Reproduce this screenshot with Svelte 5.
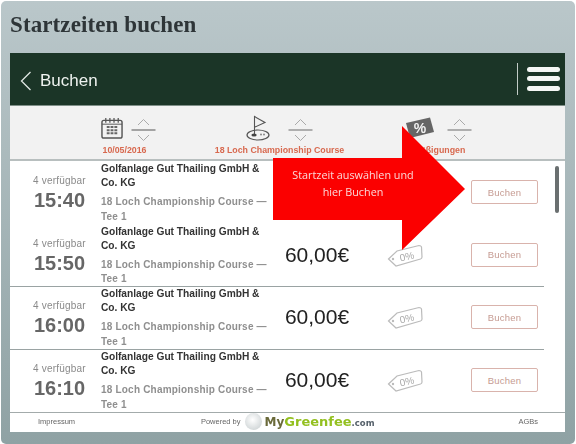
<script>
  const rows = [
    { time: "15:40", covered: true },
    { time: "15:50", covered: false },
    { time: "16:00", covered: false },
    { time: "16:10", covered: false }
  ];
</script>

<div class="page">
  <h1 class="title">Startzeiten buchen</h1>

  <div class="panel">
    <header class="topbar">
      <svg class="back" viewBox="0 0 12 20" aria-hidden="true">
        <path d="M10.5 1 L1.5 10 L10.5 19" fill="none" stroke="#dfe6e2" stroke-width="1.3" />
      </svg>
      <span class="topbar__label">Buchen</span>
      <span class="topbar__divider"></span>
      <div class="burger">
        <span></span>
        <span></span>
        <span></span>
      </div>
    </header>

    <div class="filters">
      <div class="filter">
        <div class="filter__top filter__top--date">
          <svg class="icon" width="22" height="22" viewBox="0 0 23 23" aria-hidden="true">
            <rect x="1" y="3.5" width="21" height="18.5" rx="2" fill="#f2f2f2" stroke="#555" stroke-width="1.5" />
            <path d="M5 1v5M9.3 1v5M13.6 1v5M18 1v5" stroke="#555" stroke-width="1.3" />
            <path d="M1 7.5h21" stroke="#555" stroke-width="1" />
            <path d="M6 10.5h11M6 13.8h11M6 17h11" stroke="#666" stroke-width="2" stroke-dasharray="3 1" />
          </svg>
          {@render stepper()}
        </div>
        <span class="filter__label">10/05/2016</span>
      </div>

      <div class="filter">
        <div class="filter__top filter__top--course">
          <svg class="icon" width="24" height="26" viewBox="0 0 24 26" aria-hidden="true">
            <path d="M8.5 19V1.5L19 7.5 9 12" fill="#f2f2f2" stroke="#555" stroke-width="1.1" />
            <ellipse cx="12" cy="20" rx="11" ry="5" fill="none" stroke="#555" stroke-width="1.2" />
            <ellipse cx="8" cy="20" rx="2.6" ry="1.5" fill="#444" />
            <circle cx="15" cy="19.5" r="1" fill="#888" />
            <circle cx="18" cy="19.5" r="1" fill="#888" />
          </svg>
          {@render stepper()}
        </div>
        <span class="filter__label">18 Loch Championship Course</span>
      </div>

      <div class="filter">
        <div class="filter__top filter__top--discount">
          <svg class="icon" width="30" height="22" viewBox="0 0 30 22" aria-hidden="true">
            <path d="M1 6 L25 0.5 L29 15 L5 21 Z" fill="#666" />
            <text x="15" y="16" class="percent" text-anchor="middle">%</text>
          </svg>
          {@render stepper()}
        </div>
        <span class="filter__label">Ermäßigungen</span>
      </div>
    </div>

    <div class="list">
      {#each rows as row, i}
        <div class="row" class:row--plain={i < 2}>
          <div class="row__time">
            <span class="row__free">4 verfügbar</span>
            <strong class="row__clock">{row.time}</strong>
          </div>
          <div class="row__info">
            <div class="row__name">Golfanlage Gut Thailing GmbH &amp; Co. KG</div>
            <div class="row__course">18 Loch Championship Course — Tee 1</div>
          </div>
          <!-- first row's price and tag sit behind the red arrow -->
          <div class="row__price">{row.covered ? "" : "60,00€"}</div>
          <div class="row__tag">
            {#if !row.covered}
              <svg width="36" height="24" viewBox="0 0 36 24" aria-hidden="true">
                <path d="M1.5 15 L10 7 L32 1.5 Q34 1.5 34.5 3 L35 13 Q35 14.5 33.5 15 L9 22 Z" fill="#fff" stroke="#bbb" stroke-width="1.2" />
                <circle cx="6" cy="15" r="1.2" fill="#bbb" />
                <text x="20" y="16" class="tag-text" text-anchor="middle" transform="rotate(-12 20 13)">0%</text>
              </svg>
            {/if}
          </div>
          <button class="row__btn">Buchen</button>
        </div>
      {/each}
      <span class="scrollbar"></span>
    </div>

    <footer class="foot">
      <span class="foot__link">Impressum</span>
      <div class="foot__brand">
        <span class="foot__powered">Powered by</span>
        <span class="foot__ball"></span>
        <span class="logo"><b class="logo__my">My</b><b class="logo__green">Greenfee</b><b class="logo__com">.com</b></span>
      </div>
      <span class="foot__link">AGBs</span>
    </footer>
  </div>

  <div class="callout">
    <svg width="194" height="126" viewBox="0 0 194 126" aria-hidden="true">
      <polygon points="1,33 130,33 130,1 193,64 130,125 130,95 1,95" fill="#fb0000" />
    </svg>
    <p class="callout__text">Startzeit auswählen und<br />hier Buchen</p>
  </div>
</div>

{#snippet stepper()}
  <svg class="stepper" width="25" height="26" viewBox="0 0 25 26" aria-hidden="true">
    <path d="M7 8 L12.5 2.5 L18 8" fill="none" stroke="#aaa" stroke-width="1" />
    <path d="M0.5 13h24" stroke="#888" stroke-width="1.3" />
    <path d="M7 18 L12.5 23.5 L18 18" fill="none" stroke="#aaa" stroke-width="1" />
  </svg>
{/snippet}

<style>
  :global(body) {
    background: #fff;
  }

  .page {
    position: relative;
    box-sizing: border-box;
    width: 574px;
    height: 443px;
    margin-left: 1px;
    margin-top: 1px;
    padding: 0 9px;
    border-radius: 5px;
    background: linear-gradient(#bac7ca, #8fa2a4);
    font-family: "Liberation Sans", Arial, sans-serif;
    overflow: hidden;
    filter: blur(0.6px);
  }

  .title {
    margin: 0;
    height: 52px;
    padding-top: 10px;
    box-sizing: border-box;
    font-family: "Liberation Serif", serif;
    font-size: 23px;
    line-height: 27px;
    letter-spacing: 0.1px;
    font-weight: 700;
    color: #2e3538;
  }

  .panel {
    width: 555px;
    background: #fff;
  }

  .topbar {
    display: flex;
    align-items: center;
    height: 53px;
    box-sizing: border-box;
    padding: 3px 5px 0 10px;
    background: #1b3527;
    border-bottom: 1px solid #7f8f88;
    color: #eef2ef;
  }

  .back {
    width: 12px;
    height: 20px;
    margin-right: 8px;
  }

  .topbar__label {
    font-size: 17px;
    flex: 1;
  }

  .topbar__divider {
    width: 1px;
    height: 32px;
    background: #c2ccc7;
    margin-right: 9px;
    margin-bottom: 3px;
  }

  .burger {
    display: flex;
    flex-direction: column;
    gap: 4.5px;
    width: 33px;
    margin-bottom: 4px;
  }

  .burger span {
    height: 5px;
    border-radius: 3px;
    background: #f5f7f5;
  }

  .filters {
    display: grid;
    grid-template-columns: repeat(3, 155px);
    height: 55px;
    padding: 0 53px 0 37px;
    background: #f2f2f2;
    border-bottom: 2px solid #b8bfbf;
    box-sizing: border-box;
  }

  .filter {
    display: flex;
    flex-direction: column;
    align-items: center;
    padding-top: 10px;
  }

  .filter__top {
    display: flex;
    align-items: center;
    gap: 8px;
    height: 28px;
  }

  .filter__top--date {
    margin-left: 8px;
  }

  .filter__top--course {
    gap: 18px;
  }

  .filter__top--discount {
    gap: 12px;
    margin-left: 8px;
  }

  .icon {
    margin-top: -4px;
  }

  .filter__label {
    font-size: 8.8px;
    font-weight: 700;
    line-height: 12px;
    color: #d8694f;
    white-space: nowrap;
  }

  .percent {
    font-family: "Liberation Sans", sans-serif;
    font-size: 14px;
    font-weight: 700;
    fill: #f2f2f2;
  }

  .list {
    position: relative;
    padding-right: 21px;
  }

  .row {
    display: grid;
    grid-template-columns: 91px 176px 80px 96px 1fr;
    align-items: center;
    height: 62.7px;
    box-sizing: border-box;
    border-top: 1px solid #9aa3a3;
  }

  .row--plain {
    border-top-color: transparent;
  }

  .row__time {
    display: flex;
    flex-direction: column;
    align-items: center;
    padding-left: 8px;
    color: #666;
  }

  .row__free {
    font-size: 10px;
    color: #8a8a8a;
    line-height: 14px;
    letter-spacing: 0.2px;
  }

  .row__clock {
    font-size: 20px;
    line-height: 24px;
  }

  .row__name {
    font-size: 10.2px;
    font-weight: 700;
    line-height: 14px;
    color: #333;
    margin-bottom: 5px;
  }

  .row__course {
    font-size: 10px;
    font-weight: 700;
    line-height: 14.5px;
    letter-spacing: 0.2px;
    color: #8f8f8f;
  }

  .row__price {
    margin-bottom: 2px;
    font-size: 21px;
    color: #222;
    text-align: center;
  }

  .row__tag {
    display: flex;
    justify-content: center;
  }

  .tag-text {
    font-family: "Liberation Sans", sans-serif;
    font-size: 10px;
    fill: #aaa;
  }

  .row__btn {
    width: 67px;
    height: 24px;
    padding: 0;
    margin-left: 18px;
    margin-bottom: 2px;
    background: #fff;
    border: 1px solid #d9b3ac;
    border-radius: 2px;
    font-family: "Liberation Sans", sans-serif;
    font-size: 9.5px;
    letter-spacing: 0.2px;
    color: #c69b92;
  }

  .scrollbar {
    position: absolute;
    top: 5px;
    right: 6px;
    width: 4px;
    height: 47px;
    border-radius: 2px;
    background: #6a6f70;
  }

  .foot {
    display: flex;
    align-items: center;
    justify-content: space-between;
    height: 20px;
    padding: 0 27px 1px 28px;
    border-top: 1px solid #a3abab;
    box-sizing: border-box;
    background: #fff;
  }

  .foot__link,
  .foot__powered {
    font-size: 7.5px;
    color: #666;
  }

  .foot__brand {
    display: flex;
    align-items: center;
    margin-right: 18px;
  }

  .foot__ball {
    width: 17px;
    height: 17px;
    margin: 0 3px 0 4px;
    border-radius: 50%;
    background: radial-gradient(circle at 45% 40%, #fff, #d5dadb 70%, #aeb6b6);
  }

  .logo {
    font-family: "DejaVu Sans", sans-serif;
    font-size: 12px;
    white-space: nowrap;
  }

  .logo__my {
    color: #6a6a3a;
  }

  .logo__green {
    font-size: 13px;
    color: #93c01f;
  }

  .logo__com {
    font-size: 8.5px;
    color: #55606a;
  }

  .callout {
    position: absolute;
    left: 271px;
    top: 124px;
    width: 194px;
    height: 126px;
  }

  .callout svg {
    display: block;
  }

  .callout__text {
    position: absolute;
    left: 0;
    top: 41px;
    width: 162px;
    margin: 0;
    font-family: "Open Sans", sans-serif;
    font-size: 10.8px;
    line-height: 17px;
    text-align: center;
    color: #fbd9d9;
  }
</style>
